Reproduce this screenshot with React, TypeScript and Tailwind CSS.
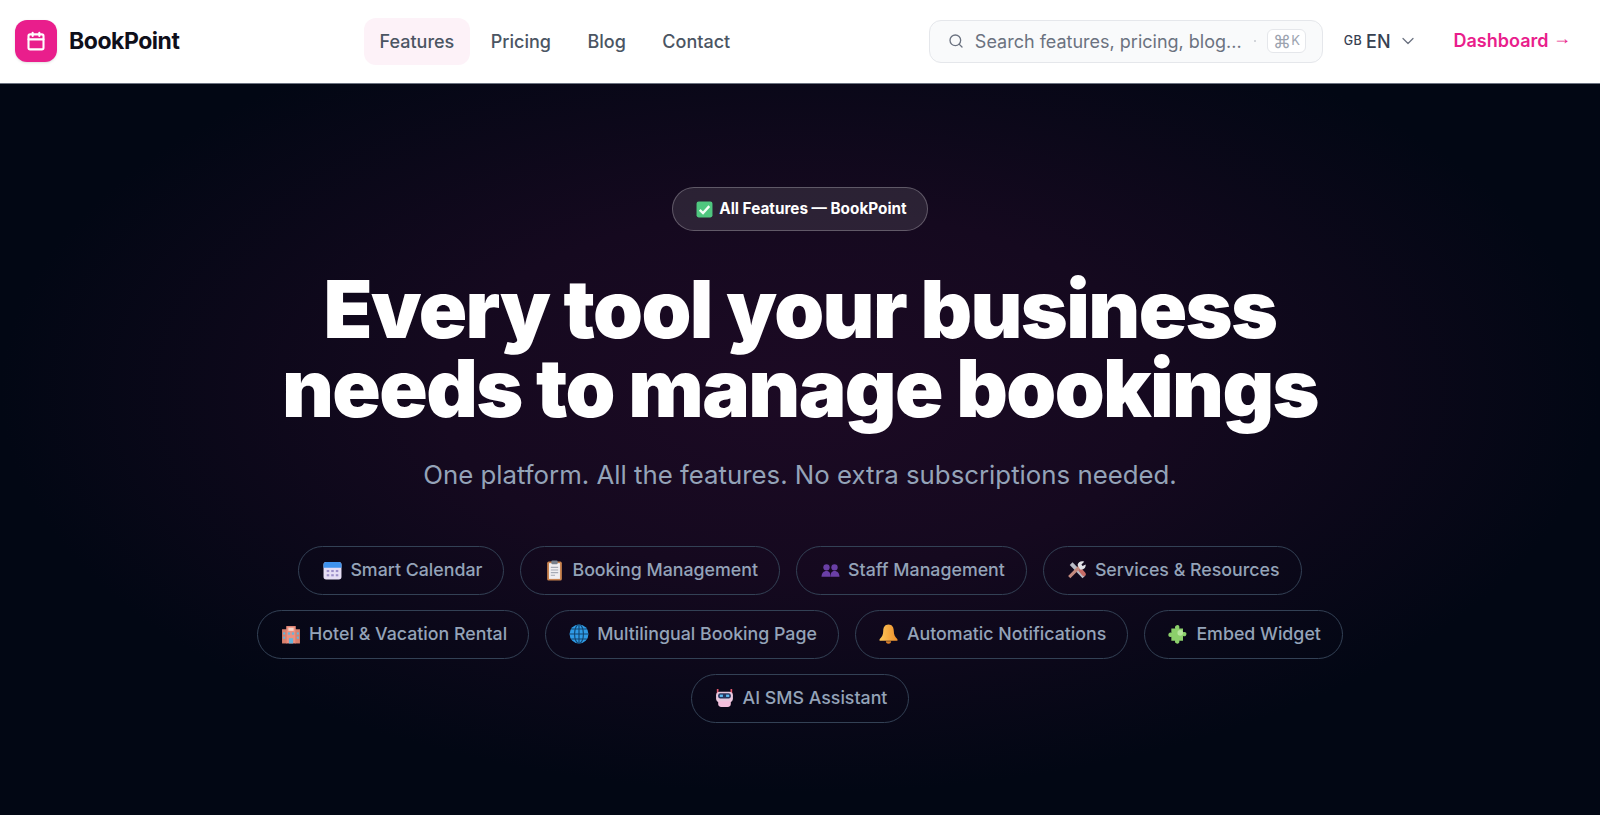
import React from 'react';
import { Calendar, ChevronDown, Search } from 'lucide-react';

const CheckEmoji = () => (
  <svg width="17" height="17" viewBox="0 0 16 16">
    <rect x="0.5" y="0.5" width="15" height="15" rx="2" fill="#4fc77f" />
    <path d="M3.5 8.3 6.6 11.3 12.5 4.8" fill="none" stroke="#f2fff6" strokeWidth="2.2" />
  </svg>
);

const CalendarEmoji = () => (
  <svg width="19" height="19" viewBox="0 0 18 18">
    <rect x="0.5" y="1" width="17" height="16.5" rx="2.5" fill="#e6def5" />
    <path d="M0.5 6.5V3.5A2.5 2.5 0 0 1 3 1h12a2.5 2.5 0 0 1 2.5 2.5v3z" fill="#3f93ee" />
    <g fill="#9d8fc9">
      <rect x="3.5" y="8.5" width="2.4" height="2" />
      <rect x="7.8" y="8.5" width="2.4" height="2" />
      <rect x="12.1" y="8.5" width="2.4" height="2" />
      <rect x="3.5" y="12.5" width="2.4" height="2" />
      <rect x="7.8" y="12.5" width="2.4" height="2" />
      <rect x="12.1" y="12.5" width="2.4" height="2" />
    </g>
  </svg>
);

const ClipboardEmoji = () => (
  <svg width="19" height="21" viewBox="0 0 18 20">
    <rect x="2" y="1.5" width="14" height="18" rx="1.5" fill="#c9834f" />
    <rect x="3.8" y="3" width="10.4" height="15" fill="#f0eef0" />
    <rect x="6" y="0.5" width="6" height="3.5" rx="1" fill="#77808c" />
    <path d="M5.5 7h7M5.5 9.5h7M5.5 12h7M5.5 14.5h4" stroke="#a5aab4" strokeWidth="1" />
  </svg>
);

const PeopleEmoji = () => (
  <svg width="19" height="17" viewBox="0 0 18 16">
    <g fill="#6a3fa6">
      <circle cx="5.2" cy="5" r="3" />
      <circle cx="12.8" cy="5" r="3" />
      <path d="M0.5 14c0-3.6 2-5.6 4.7-5.6S9 10.400 9 14z" />
      <path d="M9 14c0-3.600 1.100-5.600 3.800-5.600s4.700 2 4.700 5.600z" />
    </g>
  </svg>
);

const ToolsEmoji = () => (
  <svg width="20" height="20" viewBox="0 0 18 18">
    <path d="M2.500 4.500 5 2l11.500 12-2.500 2.500z" fill="#b9bcc6" />
    <path d="M10 9.500 12.500 7l4 4.500a1.800 1.800 0 0 1-2.700 2.500z" fill="#c66b66" />
    <path d="M1 14.500 10.500 5l2 2L3 16.500z" fill="#c28a7e" />
    <path d="M9.500 4.500C10 2 12.500 0.500 15.500 1.500L13 4l1 1.500 2.800-1.500c.3 3-2 5-5 4.500z" fill="#dfe1e6" />
  </svg>
);

const HotelEmoji = () => (
  <svg width="20" height="19" viewBox="0 0 19 18">
    <rect x="1" y="4" width="4.500" height="13.500" fill="#d9806d" />
    <rect x="13.500" y="4" width="4.500" height="13.500" fill="#d9806d" />
    <rect x="5" y="1" width="9" height="16.500" fill="#ef8f7e" />
    <rect x="7" y="2.500" width="5" height="3" fill="#f7d5c9" />
    <g fill="#64b5dc">
      <rect x="6.500" y="7" width="2.200" height="2.200" />
      <rect x="10.300" y="7" width="2.200" height="2.200" />
      <rect x="2" y="7" width="2" height="2" />
      <rect x="15" y="7" width="2" height="2" />
      <rect x="2" y="11" width="2" height="2" />
      <rect x="15" y="11" width="2" height="2" />
      <rect x="7.500" y="12.500" width="4" height="5" />
    </g>
  </svg>
);

const GlobeEmoji = () => (
  <svg width="20" height="20" viewBox="0 0 18 18">
    <circle cx="9" cy="9" r="8.500" fill="#2f9be6" />
    <g fill="none" stroke="#12456f" strokeWidth="1">
      <ellipse cx="9" cy="9" rx="4" ry="8.500" />
      <path d="M9 0.500v17M0.500 9h17M2 4.500h14M2 13.500h14" />
    </g>
  </svg>
);

const BellEmoji = () => (
  <svg width="19" height="20" viewBox="0 0 18 19">
    <defs>
      <linearGradient id="bell" x1="0" y1="0" x2="1" y2="0">
        <stop offset="0" stopColor="#fcc65a" />
        <stop offset="1" stopColor="#ee8f2a" />
      </linearGradient>
    </defs>
    <path d="M9 0.500c3.500 0 5 2.800 5 6 0 4 1.300 6 3.500 8v1.500H.500v-1.500c2.200-2 3.500-4 3.500-8 0-3.200 1.500-6 5-6z" fill="url(#bell)" />
    <path d="M6.500 16.500h5a2.500 2.300 0 0 1-5 0z" fill="#d97f2a" />
  </svg>
);

const PuzzleEmoji = () => (
  <svg width="20" height="20" viewBox="0 0 18 18">
    <path d="M7 1.500c2-1.500 4 0 3 2.500h3.500v3.500c2.500-1 4 1 2.500 3-1 1-1.800.6-2.500.2V15h-3.500c1 2-1 3.500-3 2.200-1-.8-.8-1.600-.5-2.200H3v-3.600c-2 1-3.500-1-2.200-3 .8-1 1.600-.8 2.200-.4V4h3.500c-.4-1-.3-1.800.5-2.500z" fill="#8ccf6b" />
    <circle cx="11" cy="8" r="2.500" fill="#b7e59d" />
  </svg>
);

const RobotEmoji = () => (
  <svg width="19" height="20" viewBox="0 0 18 19">
    <path d="M2.500 1v5M15.500 1v5" stroke="#e0566b" strokeWidth="1.600" />
    <rect x="1" y="3.500" width="16" height="10" rx="3.500" fill="#e9c8dd" />
    <rect x="3" y="5" width="12" height="5" rx="2" fill="#26345c" />
    <rect x="4.500" y="6.300" width="3" height="2.200" fill="#5db8f0" />
    <rect x="10.500" y="6.300" width="3" height="2.200" fill="#5db8f0" />
    <path d="M3 12.500h12v2.500a3 3 0 0 1-3 3H6a3 3 0 0 1-3-3z" fill="#f3bfdc" />
  </svg>
);

const rows = [
  [
    { icon: <CalendarEmoji />, label: 'Smart Calendar' },
    { icon: <ClipboardEmoji />, label: 'Booking Management' },
    { icon: <PeopleEmoji />, label: 'Staff Management' },
    { icon: <ToolsEmoji />, label: 'Services & Resources' },
  ],
  [
    { icon: <HotelEmoji />, label: 'Hotel & Vacation Rental' },
    { icon: <GlobeEmoji />, label: 'Multilingual Booking Page' },
    { icon: <BellEmoji />, label: 'Automatic Notifications' },
    { icon: <PuzzleEmoji />, label: 'Embed Widget' },
  ],
  [{ icon: <RobotEmoji />, label: 'AI SMS Assistant' }],
];

const Header = () => (
  <header className="flex h-[84px] items-center border-b border-[#6b7280] bg-white pb-[1px] pl-[15px] pr-[29px]">
    <div className="flex w-[349px] items-center gap-3">
      <div className="flex h-[42px] w-[42px] items-center justify-center rounded-xl bg-[#e91e8c] text-white shadow-sm">
        <Calendar size={20} strokeWidth={2.5} />
      </div>
      <span className="text-[23px] font-bold tracking-[-0.02em] text-[#0f0f1a]">BookPoint</span>
    </div>
    <nav className="flex items-center gap-[5.500px] text-[18px] font-medium text-[#4b5563]">
      <a className="rounded-xl bg-[#fdf2f8] px-[15.500px] py-[10px]">Features</a>
      <a className="px-[15.500px] py-[10px]">Pricing</a>
      <a className="px-[15.500px] py-[10px]">Blog</a>
      <a className="px-[15.500px] py-[10px]">Contact</a>
    </nav>
    <div className="ml-auto flex items-center">
      <div className="flex h-[43px] w-[394px] items-center rounded-xl border border-[#e5e7eb] bg-[#f9fafb] pl-[18px] pr-[16px]">
        <Search size={16} className="text-[#6b7280]" />
        <span className="ml-[11px] text-[18px] text-[#6b7280]">Search features, pricing, blog...</span>
        <span className="ml-[12px] h-[2px] w-[2px] rounded-full bg-[#c4c8cf]" />
        <kbd className="ml-auto flex h-[24px] items-center rounded-md border border-[#e5e7eb] bg-white px-[5px] font-['Inter',sans-serif] text-[#9ca3af]">
          <span className="text-[18px]">⌘</span>
          <span className="text-[13px]">K</span>
        </kbd>
      </div>
      <div className="ml-[21px] flex items-center text-[#374151]">
        <span className="text-[12.500px] font-medium tracking-wide">GB</span>
        <span className="ml-[4px] text-[18px] font-medium">EN</span>
        <ChevronDown size={20} strokeWidth={1.5} className="ml-[7px] text-[#6b7280]" />
      </div>
      <a className="ml-[36px] text-[18px] font-semibold text-[#e91e8c]">
        Dashboard{' '}
        <span className="inline-block -translate-y-[3px] font-['Liberation_Sans',sans-serif] font-normal">→</span>
      </a>
    </div>
  </header>
);

const Hero = () => (
  <section className="flex h-[731px] flex-col items-center bg-[#020714] bg-[radial-gradient(ellipse_50%_55%_at_50%_42%,#1c0a24_0%,#15091f_45%,#020714_100%)] pt-[103px]">
    <div className="flex h-[44px] items-center gap-[6px] rounded-full border border-white/25 bg-white/10 pl-[23px] pr-[20px] text-[15.300px] font-bold text-white">
      <CheckEmoji />
      <span>All Features — BookPoint</span>
    </div>
    <h1 className="mt-[38px] text-center text-[80px] font-black leading-[79px] tracking-[-0.02em] text-white">
      Every tool your business
      <br />
      needs to manage bookings
    </h1>
    <p className="mt-[29px] text-[25.800px] text-[#94a3b8]">One platform. All the features. No extra subscriptions needed.</p>
    <div className="mt-[51px] flex flex-col items-center gap-[15px]">
      {rows.map((row, i) => (
        <div key={i} className="flex gap-4">
          {row.map((chip) => (
            <div
              key={chip.label}
              className="flex h-[49px] items-center gap-2 rounded-full border border-[#334155] pl-[23px] pr-[21px] text-[17.800px] font-medium text-[#94a3b8]"
            >
              <span className="flex w-[20px] justify-center">{chip.icon}</span>
              <span>{chip.label}</span>
            </div>
          ))}
        </div>
      ))}
    </div>
  </section>
);

export default function App() {
  return (
    <div className="h-[815px] overflow-hidden font-['Inter',sans-serif]">
      <Header />
      <Hero />
    </div>
  );
}
